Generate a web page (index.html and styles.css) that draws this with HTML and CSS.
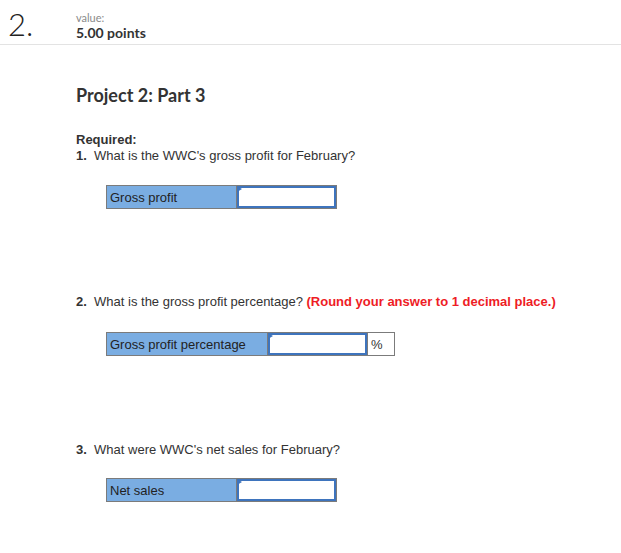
FILE: index.html
```html
<!DOCTYPE html>
<html>
<head>
<meta charset="utf-8">
<link rel="stylesheet" href="styles.css">
</head>
<body>
<div class="header">
  <div class="qnum">2.</div>
  <div class="value">
    <div class="value-label">value:</div>
    <div class="value-points">5.00 points</div>
  </div>
</div>
<div class="content">
  <h1 class="title">Project 2: Part 3</h1>
  <div class="required">Required:</div>
  <div class="question"><b>1.</b>&nbsp; What is the WWC's gross profit for February?</div>
  <table class="answer t1">
    <tr>
      <td class="label w1">Gross profit</td>
      <td class="input"><span class="flag"></span><div class="box"></div></td>
    </tr>
  </table>

  <div class="question q2"><b>2.</b>&nbsp; What is the gross profit percentage? <span class="note">(Round your answer to 1 decimal place.)</span></div>
  <table class="answer t2">
    <tr>
      <td class="label w2">Gross profit percentage</td>
      <td class="input"><span class="flag"></span><div class="box"></div></td>
      <td class="unit">%</td>
    </tr>
  </table>

  <div class="question q3"><b>3.</b>&nbsp; What were WWC's net sales for February?</div>
  <table class="answer t3">
    <tr>
      <td class="label w1">Net sales</td>
      <td class="input"><span class="flag"></span><div class="box"></div></td>
    </tr>
  </table>
</div>
</body>
</html>
```

FILE: styles.css
```css
html, body {
  margin: 0;
  padding: 0;
  background: #ffffff;
}
body {
  font-family: "Liberation Sans", Arial, sans-serif;
  color: #333333;
}
.header {
  display: flex;
  align-items: flex-start;
  height: 44px;
  border-bottom: 1px solid #e3e3e3;
}
.qnum {
  font-family: Lato, "Open Sans", sans-serif;
  font-weight: 300;
  font-size: 31px;
  line-height: 30px;
  color: #222222;
  margin: 9px 0 0 8px;
  width: 68px;
}
.value {
  margin-top: 11px;
  font-family: Lato, "Open Sans", sans-serif;
}
.value-label {
  font-size: 11px;
  line-height: 14px;
  color: #8a8a8a;
}
.value-points {
  font-size: 14px;
  line-height: 16px;
  font-weight: 700;
  color: #333333;
}
.content {
  padding-left: 76px;
}
.title {
  font-family: Lato, "Open Sans", sans-serif;
  font-weight: 700;
  font-size: 18px;
  line-height: 20px;
  color: #333333;
  margin: 40px 0 0 0;
}
.required {
  font-weight: 700;
  font-size: 13px;
  line-height: 16px;
  margin-top: 27px;
  color: #333333;
}
.question {
  font-size: 13px;
  line-height: 16px;
  color: #333333;
}
.question b {
  font-weight: 700;
}
.note {
  color: #ee1c25;
  font-weight: 700;
}
.q2 {
  margin-top: 85px;
}
.q3 {
  margin-top: 86px;
}
.answer {
  border-collapse: collapse;
  margin-left: 30px;
  font-size: 13px;
}
.t1 { margin-top: 21px; }
.t2 { margin-top: 22px; }
.t3 { margin-top: 20px; }
.answer td {
  border: 1px solid #7b7b7b;
  padding: 0;
  height: 22px;
}
.label {
  background: #7aade2;
  color: #222222;
  padding: 0 3px !important;
  vertical-align: middle;
}
.w1 { width: 123px; }
.w2 { width: 154px; }
.input {
  position: relative;
  width: 99px;
}
.box {
  height: 18px;
  border: 2px solid #3e74bd;
}
.flag {
  position: absolute;
  left: 0;
  top: 0;
  width: 0;
  height: 0;
  border-top: 3px solid transparent;
  border-bottom: 3px solid transparent;
  border-left: 5px solid #3e74bd;
}
.unit {
  width: 20px;
  padding: 0 3px !important;
  color: #333333;
}
```
